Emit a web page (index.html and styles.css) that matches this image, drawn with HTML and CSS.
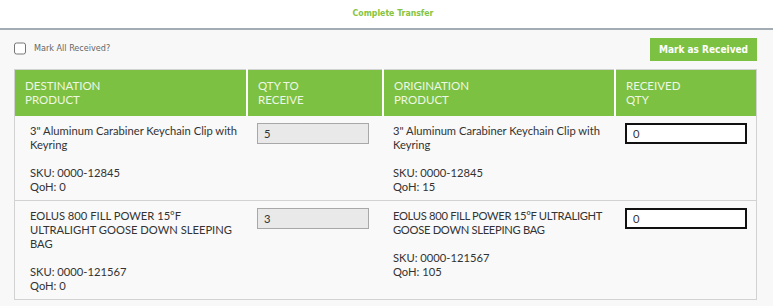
FILE: index.html
```html
<!DOCTYPE html>
<html lang="en">
<head>
  <meta charset="UTF-8">
  <title>Complete Transfer</title>
  <link rel="stylesheet" href="styles.css">
</head>
<body>
  <div class="modal-head">
    <h3 class="modal-title">Complete Transfer</h3>
  </div>
  <div class="modal-body">
    <div class="toolbar">
      <label class="check-all"><input type="checkbox" id="markAll"> <span>Mark All Received?</span></label>
      <button type="button" class="btn-green">Mark as Received</button>
    </div>
    <table class="transfer">
      <thead>
        <tr>
          <th class="c-dest">Destination<br>Product</th>
          <th class="c-qty">Qty to<br>Receive</th>
          <th class="c-orig">Origination<br>Product</th>
          <th class="c-recv">Received<br>Qty</th>
        </tr>
      </thead>
      <tbody>
        <tr>
          <td class="prod">3" Aluminum Carabiner Keychain Clip with Keyring<br><br>SKU: 0000-12845<br>QoH: 0</td>
          <td><input type="text" class="qty" value="5" readonly></td>
          <td class="prod-o">3" Aluminum Carabiner Keychain Clip with Keyring<br><br>SKU: 0000-12845<br>QoH: 15</td>
          <td><input type="text" class="recv" value="0"></td>
        </tr>
        <tr>
          <td class="prod">EOLUS 800 FILL POWER 15°F ULTRALIGHT GOOSE DOWN SLEEPING BAG<br><br>SKU: 0000-121567<br>QoH: 0</td>
          <td><input type="text" class="qty" value="3" readonly></td>
          <td class="prod-o"><span class="caps">EOLUS 800 FILL POWER 15°F ULTRALIGHT GOOSE DOWN SLEEPING BAG</span><br><br>SKU: 0000-121567<br>QoH: 105</td>
          <td><input type="text" class="recv" value="0"></td>
        </tr>
      </tbody>
    </table>
  </div>
</body>
</html>
```

FILE: styles.css
```css
body { margin: 0; background: #f8f8f8; font-family: Lato, "Open Sans", Arial, sans-serif; color: #333; }
.modal-head { background: #fff; height: 28px; border-bottom: 2px solid #a3abb3; text-align: center; }
.modal-title { margin: 0; padding: 8px 0 0 13px; font-family: "DejaVu Sans Condensed", sans-serif; font-size: 8.7px; font-weight: bold; color: #86c440; }
.modal-body { padding: 8px 16px 0 14px; }
.toolbar { display: flex; justify-content: space-between; align-items: center; height: 23px; margin-bottom: 8px; }
.check-all { display: flex; align-items: center; gap: 8px; font-family: "DejaVu Sans Condensed", sans-serif; font-size: 9px; color: #666; margin-top: -3px; }
.check-all input { margin: 0; width: 12px; height: 13px; }
.btn-green { height: 23px; width: 107px; border: 0; background: #7dc142; color: #fff; font-family: "DejaVu Sans Condensed", sans-serif; font-size: 10px; font-weight: bold; padding: 0; }
.transfer { width: 743px; border-collapse: collapse; border: 1px solid #d2d2d2; background: #f9f9f9; }
.transfer th { background: #7dc142; color: #eef7e4; font-size: 11.5px; font-weight: normal; text-transform: uppercase; text-align: left; line-height: 14px; padding: 9px 10px 9px 10px; border-left: 2px solid #fff; vertical-align: top; }
.transfer th:first-child { border-left: 0; }
.transfer td { font-size: 11.2px; line-height: 14px; padding: 8px 9px 6px 10px; vertical-align: top; border-bottom: 1px solid #d2d2d2; }
.c-dest { width: 213px; }
.c-qty { width: 114px; }
.c-orig { width: 212px; }
.transfer td.prod { padding-left: 15px; padding-right: 8px; }
.caps { letter-spacing: -0.3px; }
.qty { width: 112px; height: 21px; box-sizing: border-box; border: 1px solid #a8a8a8; background: #e9e9e9; font-family: inherit; font-size: 11.2px; padding: 0 6px; margin-top: -1px; color: #333; }
.recv { width: 122px; height: 21px; box-sizing: border-box; border: 2px solid #111; background: #fff; font-family: inherit; font-size: 11.2px; padding: 0 6px; margin-top: -1px; color: #333; }
```
